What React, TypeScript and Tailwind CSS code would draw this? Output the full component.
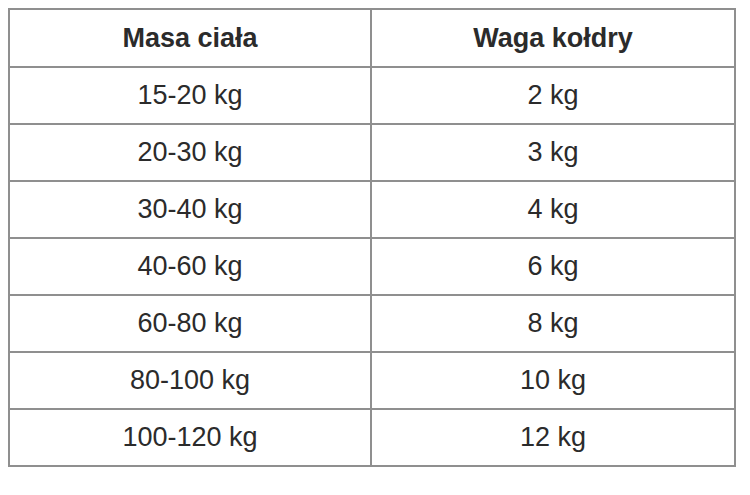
const rows: [string, string][] = [
  ["15-20 kg", "2 kg"],
  ["20-30 kg", "3 kg"],
  ["30-40 kg", "4 kg"],
  ["40-60 kg", "6 kg"],
  ["60-80 kg", "8 kg"],
  ["80-100 kg", "10 kg"],
  ["100-120 kg", "12 kg"],
];

export default function App() {
  return (
    <div className="min-h-screen bg-white pl-[8px] pt-[8px] font-['Liberation_Sans',Arial,sans-serif] text-[27px] text-[#2b2b2b]">
      <table className="w-[728px] table-fixed border-collapse border-2 border-[#8f8f8f]">
        <thead>
          <tr>
            <th className="h-[58px] w-[362px] border-2 border-[#8f8f8f] text-center font-bold">Masa ciała</th>
            <th className="h-[58px] border-2 border-[#8f8f8f] text-center font-bold">Waga kołdry</th>
          </tr>
        </thead>
        <tbody>
          {rows.map(([mass, weight]) => (
            <tr key={mass}>
              <td className="h-[57px] border-2 border-[#8f8f8f] text-center">{mass}</td>
              <td className="h-[57px] border-2 border-[#8f8f8f] text-center">{weight}</td>
            </tr>
          ))}
        </tbody>
      </table>
    </div>
  );
}
